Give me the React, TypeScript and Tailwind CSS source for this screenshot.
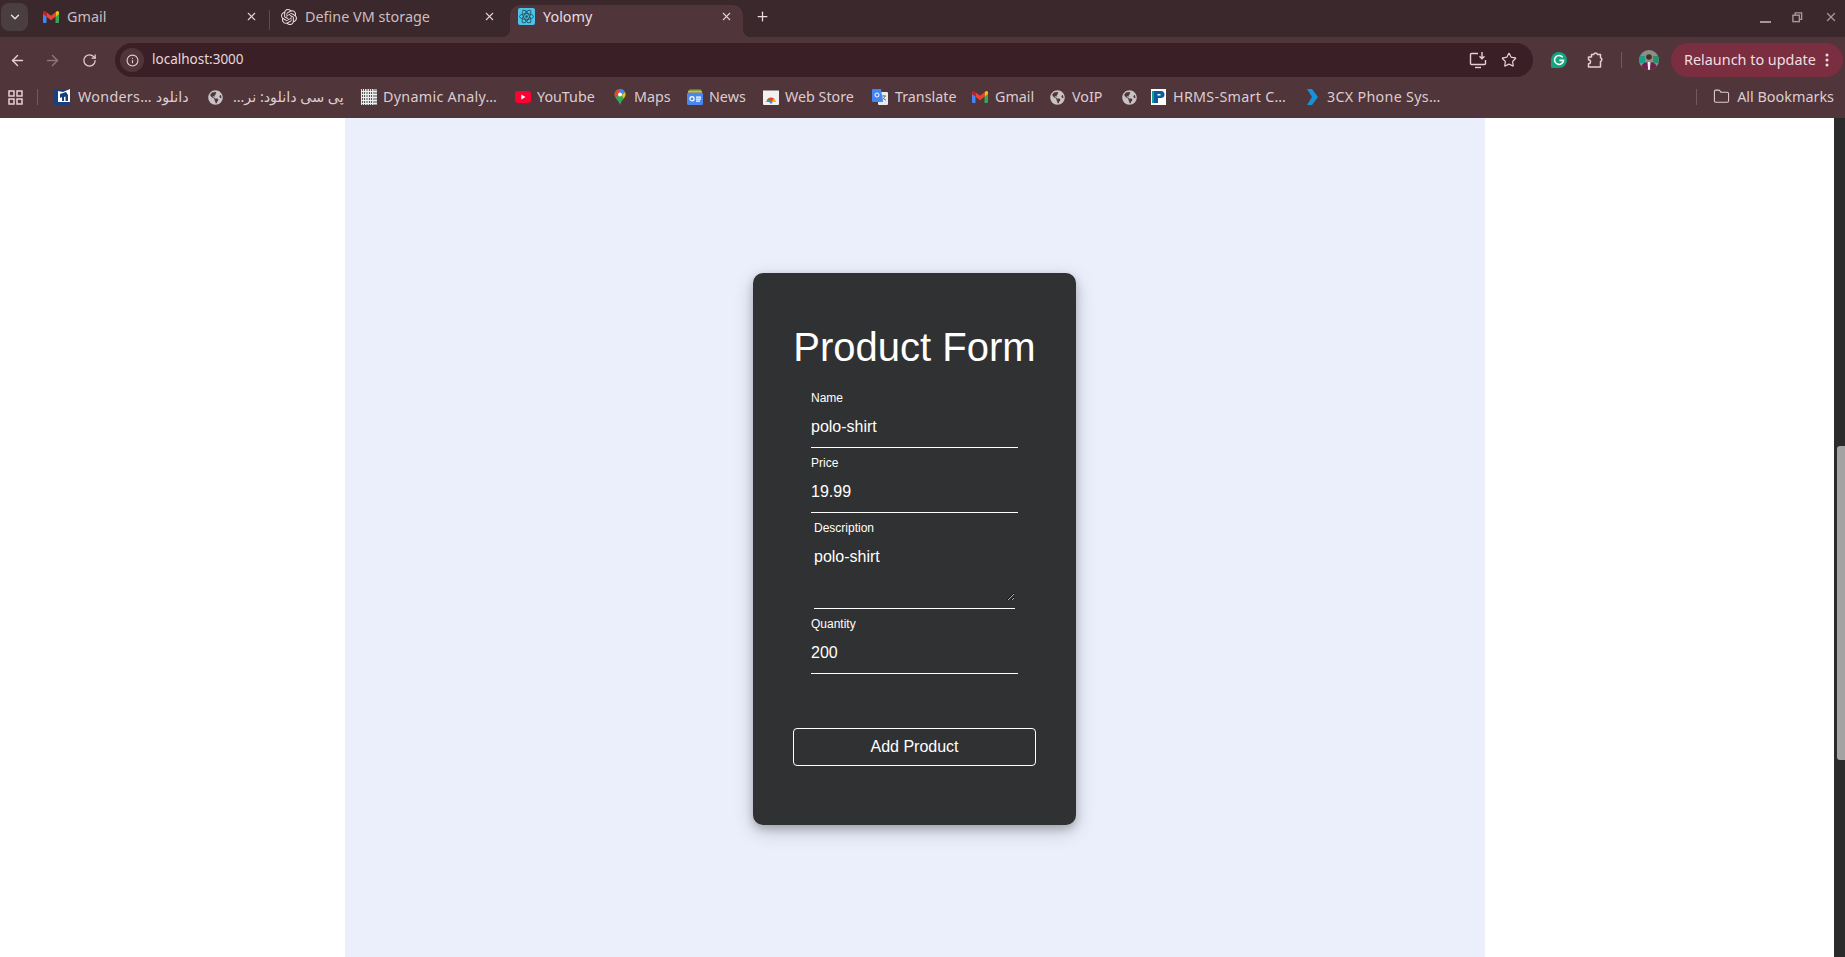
import React from "react";
import { ArrowLeft, ArrowRight, ChevronDown, Folder, Info, Plus, RotateCw, Star, X } from "lucide-react";
import { FaGlobeAmericas } from "react-icons/fa";
import { SiOpenai } from "react-icons/si";

const Gmail = () => (
  <svg width="16" height="12" viewBox="0 0 16 12">
    <path d="M0 2.2V11a1 1 0 0 0 1 1h2.5V5.2z" fill="#4285f4" />
    <path d="M16 2.2V11a1 1 0 0 1-1 1h-2.500V5.200z" fill="#34a853" />
    <path d="M12.500 1.200V5.800L16 3V1.600C16 .3 14.600 -.4 13.600 .4z" fill="#fbbc04" />
    <path d="M3.500 5.800V1.200L8 4.800l4.500-3.600v4.600L8 9.200z" fill="#ea4335" />
    <path d="M0 1.600V3l3.500 2.800V1.200L2.400 .4C1.400 -.4 0 .3 0 1.600z" fill="#c5221f" />
  </svg>
);

const ReactTile = () => (
  <svg width="17" height="17" viewBox="0 0 17 17">
    <rect width="17" height="17" rx="2" fill="#4cc4ea" />
    <g fill="none" stroke="#25525f" strokeWidth="0.9">
      <ellipse cx="8.500" cy="8.500" rx="7" ry="2.800" />
      <ellipse cx="8.500" cy="8.500" rx="7" ry="2.800" transform="rotate(60 8.500 8.500)" />
      <ellipse cx="8.500" cy="8.500" rx="7" ry="2.800" transform="rotate(120 8.500 8.500)" />
    </g>
    <circle cx="8.500" cy="8.500" r="1.300" fill="#25525f" />
  </svg>
);

const Globe = () => <FaGlobeAmericas size={15} color="#c9c3c5" />;

const Wonders = () => (
  <svg width="16" height="16" viewBox="0 0 16 16">
    <rect width="16" height="16" fill="#fff" />
    <path d="M0 0h16L9 3 4 2v14H0z" fill="#1b3f78" />
    <path d="M6 5l6-2 2 3v6h-2.500V7.500L10 8v4H8V8L6 9z" fill="#1b3f78" />
    <path d="M4 16v-3h12v3z" fill="#1b3f78" />
  </svg>
);

const Dynamic = () => (
  <svg width="16" height="16" viewBox="0 0 16 16">
    <rect width="16" height="16" fill="#e4e4e4" />
    <path d="M1 0h1v16H1zM3 0h1v16H3zM5.500 0h1v16h-1zM8 0h1v16H8zM10 0h1v16h-1zM12.500 0h1v16h-1zM14.500 0h1v16h-1z" fill="#555" />
    <path d="M0 2h16v1H0zM0 5h16v1H0zM0 8h16v1H0zM0 11h16v1H0zM0 14h16v1H0z" fill="#eee" />
  </svg>
);

const YouTube = () => (
  <svg width="16" height="12" viewBox="0 0 16 12">
    <rect width="16" height="12" rx="3" fill="#ff0033" />
    <path d="M6.300 3.500v5l4.200-2.500z" fill="#fff" />
  </svg>
);

const Maps = () => (
  <svg width="16" height="18" viewBox="0 0 16 16">
    <path d="M8 0a5.500 5.500 0 0 0-5.500 5.500C2.500 9 6.500 11 8 16c1.500-5 5.500-7 5.500-10.500A5.500 5.500 0 0 0 8 0z" fill="#34a853" />
    <path d="M3.500 2.500A5.500 5.500 0 0 1 8 0l1.500 4L4 8C3 7 2.500 6.500 2.500 5.500z" fill="#ea4335" />
    <path d="M8 0a5.500 5.500 0 0 1 5 3.300L9.800 6 7 2z" fill="#4285f4" />
    <path d="M13 3.300a5.500 5.500 0 0 1 .5 2.200C13.500 7 12.500 8.300 11.500 9.500L9.800 6z" fill="#fbbc04" />
    <circle cx="8" cy="5.500" r="2" fill="#fff" />
  </svg>
);

const News = () => (
  <svg width="16" height="16" viewBox="0 0 16 16">
    <rect x="2" y="0" width="12" height="8" rx="1" fill="#0c9d58" />
    <rect x="1" y="1.500" width="14" height="7" rx="1" fill="#f4b400" />
    <rect x="0" y="3.500" width="16" height="12.500" rx="1.500" fill="#4a86f0" />
    <circle cx="5" cy="9.700" r="2.100" fill="none" stroke="#fff" strokeWidth="1.200" />
    <path d="M9 7.500h5v1.300H9zM9 9.500h5v1.300H9zM9 11.500h4v1.300H9z" fill="#fff" />
  </svg>
);

const WebStore = () => (
  <svg width="16" height="16" viewBox="0 0 16 16">
    <path d="M0 1.500h16V15a1 1 0 0 1-1 1H1a1 1 0 0 1-1-1z" fill="#f1f1f1" />
    <path d="M3.500 13a4.500 4.500 0 0 1 9 0z" fill="#ea4335" />
    <path d="M3.500 13h4.300l-2-3.400A4.500 4.500 0 0 0 3.500 13z" fill="#34a853" />
    <path d="M8 13h4.500a4.500 4.500 0 0 0-1.500-3.300z" fill="#fbbc04" />
    <circle cx="8" cy="13" r="1.500" fill="#4285f4" />
  </svg>
);

const Translate = () => (
  <svg width="16" height="16" viewBox="0 0 16 16">
    <rect x="6" y="3" width="10" height="13" rx="1" fill="#e8eaed" />
    <path d="M10 7h4M12 6v1M13 7c-.5 2-2 3.500-3 4M10.500 8.500c.8 1.200 2 2.200 3.500 2.700" stroke="#5f6368" strokeWidth="0.800" fill="none" />
    <path d="M1 0h8l2 13H1a1 1 0 0 1-1-1V1a1 1 0 0 1 1-1z" fill="#4285f4" />
    <circle cx="5" cy="6" r="2" fill="none" stroke="#fff" strokeWidth="1" />
  </svg>
);

const Hrms = () => (
  <svg width="15" height="16" viewBox="0 0 15 16">
    <rect width="15" height="16" fill="#fff" />
    <path d="M3 2h7a3 3 0 0 1 0 7H7v5H3z" fill="#0d5c9e" />
    <path d="M6.500 5h3v1.500h-3z" fill="#fff" />
    <path d="M1 2h2v12H1z" fill="#12a09a" />
  </svg>
);

const ThreeCx = () => (
  <svg width="14" height="16" viewBox="-3 0 14 16">
    <path d="M-1 0h5l6 8-6 8h-5l5-8z" fill="#1693d8" />
  </svg>
);

const Grammarly = () => (
  <svg width="16" height="16" viewBox="0 0 20 20">
    <path d="M10 0a10 10 0 0 1 0 20H1.500A1.500 1.500 0 0 1 0 18.500V10A10 10 0 0 1 10 0z" fill="#15a37f" />
    <path d="M14.600 6.700A5.600 5.600 0 1 0 15.600 10.500H10.500" fill="none" stroke="#fff" strokeWidth="2" />
  </svg>
);

const Puzzle = () => (
  <svg width="18" height="18" viewBox="0 0 18 18" fill="none" stroke="#e7cfd3" strokeWidth="1.500" strokeLinejoin="round">
    <path d="M5.500 3.500h2.200a2 2 0 0 1 3.800 0h3v3.200a2 2 0 0 1 0 3.800v5.500H2.500v-3.200a2 2 0 0 0 2-2 2 2 0 0 0-2-2V6h3z" />
  </svg>
);

const InstallIcon = () => (
  <svg width="18" height="18" viewBox="0 0 18 18" fill="none" stroke="#e7cfd3" strokeWidth="1.400">
    <path d="M9 2.500H2.500a1 1 0 0 0-1 1v9a1 1 0 0 0 1 1h13a1 1 0 0 0 1-1V9" />
    <path d="M6 16.500h6" />
    <path d="M13 1v6.500M10.500 5.300 13 7.800l2.500-2.500" />
  </svg>
);

const Avatar = () => (
  <svg width="20" height="20" viewBox="0 0 20 20">
    <defs>
      <clipPath id="av"><circle cx="10" cy="10" r="10" /></clipPath>
    </defs>
    <g clipPath="url(#av)">
      <rect width="20" height="20" fill="#8a8f88" />
      <rect y="6" width="6" height="7" fill="#1f9d88" />
      <rect x="14" y="6" width="6" height="7" fill="#2e8f6e" />
      <path d="M2 20c0-6 3-8 8-8s8 2 8 8z" fill="#6e1f4c" />
      <path d="M8.500 12h3l-.6 8H9.100z" fill="#f1ecec" />
      <circle cx="10" cy="7" r="2.800" fill="#4a2c25" />
    </g>
  </svg>
);

function Tab({ widthClass, icon, title, active }: { widthClass: string; icon: React.ReactNode; title: string; active?: boolean }) {
  return (
    <div className={`relative flex items-center h-[32px] pb-[9px] ${widthClass} ${active ? "bg-[#50353b] rounded-t-[10px] text-[#eadde0]" : "text-[#cdbdc0]"}`}>
      {active && <div className="absolute left-[-8px] bottom-0 w-[8px] h-[8px] bg-[radial-gradient(circle_at_0_0,transparent_8px,#50353b_8px)]" />}
      {active && <div className="absolute right-[-8px] bottom-0 w-[8px] h-[8px] bg-[radial-gradient(circle_at_100%_0,transparent_8px,#50353b_8px)]" />}
      <div className="w-[17px] flex justify-center">{icon}</div>
      <span className="ml-[8px] flex-1 text-[14.400px] whitespace-nowrap">{title}</span>
      <X size={13} strokeWidth={2} className="text-[#e0d2d5]" />
    </div>
  );
}

function Bm({ widthClass, icon, text, rtl, wide, textGap = "ml-[6px]", iconGap = "ml-[2px]" }: { widthClass: string; icon: React.ReactNode; text?: string; rtl?: boolean; wide?: boolean; textGap?: string; iconGap?: string }) {
  return (
    <div className={`flex items-center shrink-0 ${widthClass}`}>
      <div className={`w-[16px] flex justify-center shrink-0 ${iconGap}`}>{icon}</div>
      {text && (
        <span
          dir={rtl ? "rtl" : "ltr"}
          className={`${textGap} text-[14.300px] text-[#dccdd0] whitespace-nowrap font-['Noto_Sans','DejaVu_Sans',sans-serif] ${wide ? "tracking-[0.300px]" : ""}`}
        >
          {text}
        </span>
      )}
    </div>
  );
}

function Field({ label, value }: { label: string; value: string }) {
  return (
    <div className="w-[207px] mb-[8px]">
      <label className="block text-[12px] leading-[14px] text-white">{label}</label>
      <input
        readOnly
        value={value}
        className="block w-full h-[43px] pt-[2px] bg-transparent border-b border-white text-[16px] text-white outline-none"
      />
    </div>
  );
}

export default function App() {
  return (
    <div className="h-screen w-full overflow-hidden flex flex-col bg-white font-['Noto_Sans',sans-serif]">
      {/* tab strip */}
      <div className="h-[37px] bg-[#3a282c] flex items-end shrink-0 relative">
        <div className="flex items-end h-[37px]">
          <div className="ml-[1px] mb-[6px] w-[27px] h-[28px] rounded-[8px] bg-[#4b3e41] flex items-center justify-center">
            <ChevronDown size={14} strokeWidth={2.500} className="text-[#eadde0]" />
          </div>
          <Tab widthClass="w-[237px] ml-[4px] pl-[10px] pr-[11px]" icon={<Gmail />} title="Gmail" />
          <div className="w-[1px] h-[20px] bg-[#5f4a4f] mb-[7px]" />
          <Tab widthClass="w-[235px] pl-[10px] pr-[9px]" icon={<SiOpenai size={16} color="#e6dbdd" />} title="Define VM storage" />
          <Tab widthClass="w-[233px] ml-[5px] pl-[8px] pr-[10px]" icon={<ReactTile />} title="Yolomy" active />
          <div className="ml-[12px] h-[32px] pb-[9px] flex items-center">
            <Plus size={15} strokeWidth={2} className="text-[#eadde0]" />
          </div>
        </div>
        <div className="ml-auto flex items-center h-[37px] pb-[3px]">
          <div className="w-[11px] h-[2px] bg-[#a8979a] mt-[9px]" />
          <svg width="11" height="11" viewBox="0 0 12 12" fill="none" stroke="#a8979a" strokeWidth="1.500" className="ml-[21px]">
            <rect x="1" y="3.500" width="7" height="7" />
            <path d="M3.500 3.500V1h7v7H8" />
          </svg>
          <X size={14} strokeWidth={2.200} className="ml-[21px] mr-[7px] text-[#a8979a]" />
        </div>
      </div>

      {/* toolbar */}
      <div className="h-[40px] bg-[#50353b] flex items-start pt-[6px] shrink-0">
        <div className="w-[115px] h-[34px] flex items-center pl-[9px] shrink-0">
          <ArrowLeft size={17} strokeWidth={2} className="text-[#e7cfd3]" />
          <ArrowRight size={17} strokeWidth={2} className="ml-[18px] text-[#8d777b]" />
          <RotateCw size={15} strokeWidth={2} className="ml-[21px] text-[#e7cfd3]" />
        </div>
        <div className="w-[1418px] h-[34px] rounded-full bg-[#3a2026] flex items-center pl-[5px] pr-[16px] shrink-0">
          <div className="w-[24px] h-[24px] rounded-full bg-[#50353b] flex items-center justify-center">
            <Info size={13} strokeWidth={2} className="text-[#e7cfd3]" />
          </div>
          <span className="ml-[8px] mb-[1px] text-[13.500px] text-[#e6d7da]">localhost:3000</span>
          <div className="ml-auto flex items-center gap-[14px]">
            <InstallIcon />
            <Star size={16} strokeWidth={1.800} className="text-[#e7cfd3]" />
          </div>
        </div>
        <div className="h-[34px] w-[138px] flex items-center pl-[18px] shrink-0">
          <Grammarly />
          <div className="ml-[19px]"><Puzzle /></div>
          <div className="ml-[17px] w-[1px] h-[16px] bg-[#6f5a5e]" />
          <div className="ml-[17px]"><Avatar /></div>
        </div>
        <div className="w-[172px] h-[34px] rounded-full bg-[#7a2e40] flex items-center pl-[13px] shrink-0">
          <span className="mb-[1px] text-[14.400px] text-[#f0dfe2] whitespace-nowrap">Relaunch to update</span>
          <svg width="4" height="14" viewBox="0 0 4 14" className="ml-auto mr-[14px]" fill="#f0dfe2">
            <circle cx="2" cy="2" r="1.500" />
            <circle cx="2" cy="7" r="1.500" />
            <circle cx="2" cy="12" r="1.500" />
          </svg>
        </div>
      </div>

      {/* bookmarks */}
      <div className="h-[41px] bg-[#50353b] flex items-center shrink-0 pb-[1px]">
        <svg width="15" height="15" viewBox="0 0 15 15" fill="none" stroke="#e7cfd3" strokeWidth="1.500" className="ml-[8px] shrink-0">
          <rect x="1" y="1" width="5" height="5" />
          <rect x="9" y="1" width="5" height="5" />
          <rect x="1" y="9" width="5" height="5" />
          <rect x="9" y="9" width="5" height="5" />
        </svg>
        <div className="ml-[14px] mr-[16px] w-[1px] h-[16px] bg-[#6f5a5e] shrink-0" />
        <Bm widthClass="w-[153px]" icon={<Wonders />} text="Wonders… دانلود" wide iconGap="ml-0" textGap="ml-[8px]" />
        <Bm widthClass="w-[152px]" icon={<Globe />} text="پی سی دانلود: نر…" rtl iconGap="ml-0" textGap="ml-[10px]" />
        <Bm widthClass="w-[154px]" icon={<Dynamic />} text="Dynamic Analy…" wide />
        <Bm widthClass="w-[97px]" icon={<YouTube />} text="YouTube" />
        <Bm widthClass="w-[75px]" icon={<Maps />} text="Maps" />
        <Bm widthClass="w-[76px]" icon={<News />} text="News" />
        <Bm widthClass="w-[110px]" icon={<WebStore />} text="Web Store" />
        <Bm widthClass="w-[100px]" icon={<Translate />} text="Translate" iconGap="ml-[1px]" textGap="ml-[7px]" />
        <Bm widthClass="w-[77px]" icon={<Gmail />} text="Gmail" iconGap="ml-[1px]" textGap="ml-[7px]" />
        <Bm widthClass="w-[71px]" icon={<Globe />} text="VoIP" iconGap="ml-[1px]" textGap="ml-[7px]" />
        <Bm widthClass="w-[30px]" icon={<Globe />} />
        <Bm widthClass="w-[154px]" icon={<Hrms />} text="HRMS-Smart C…" wide iconGap="ml-[1px]" textGap="ml-[7px]" />
        <Bm widthClass="w-[150px]" icon={<ThreeCx />} text="3CX Phone Sys…" wide iconGap="ml-[1px]" textGap="ml-[7px]" />
        <div className="ml-auto flex items-center shrink-0">
          <div className="w-[1px] h-[16px] bg-[#6f5a5e]" />
          <Folder size={17} strokeWidth={1.500} className="ml-[16px] text-[#dccdd0]" />
          <span className="ml-[7px] mr-[11px] text-[14.400px] text-[#dccdd0] whitespace-nowrap">All Bookmarks</span>
        </div>
      </div>

      {/* page */}
      <div className="flex-1 flex min-h-0 font-['Liberation_Sans',Arial,sans-serif]">
        <div className="flex-1 min-w-0">
          <div className="ml-[345px] w-[1140px] h-full bg-[#ebeffc] pt-[155px] pr-[1px] flex flex-col items-center">
            <div className="w-[323px] h-[552px] shrink-0 rounded-[10px] bg-[#303133] flex flex-col items-center pt-[51px] shadow-[0_4px_8px_0_rgba(0,0,0,0.2),0_6px_20px_0_rgba(0,0,0,0.19)]">
              <h2 className="text-[40px] leading-[46px] text-white mb-[21px] whitespace-nowrap">Product Form</h2>
              <Field label="Name" value="polo-shirt" />
              <Field label="Price" value="19.99" />
              <div className="w-[201px] mb-[8px]">
                <label className="block text-[12px] leading-[14px] text-white">Description</label>
                <div className="border-b border-white pb-[7px]">
                  <textarea
                    readOnly
                    value="polo-shirt"
                    className="block w-full h-[66px] pt-[13px] bg-transparent text-[16px] leading-[18px] text-white outline-none"
                  />
                </div>
              </div>
              <Field label="Quantity" value="200" />
              <button className="mt-[46px] w-[243px] h-[38px] rounded-[4px] border border-white text-[16px] text-white bg-transparent">
                Add Product
              </button>
            </div>
          </div>
        </div>
        <div className="w-[11px] bg-[#2b2b2b] shrink-0 pt-[328px] pl-[3px]">
          <div className="h-[314px] rounded-l-[3px] bg-[#a3a3a3]" />
        </div>
      </div>
    </div>
  );
}
